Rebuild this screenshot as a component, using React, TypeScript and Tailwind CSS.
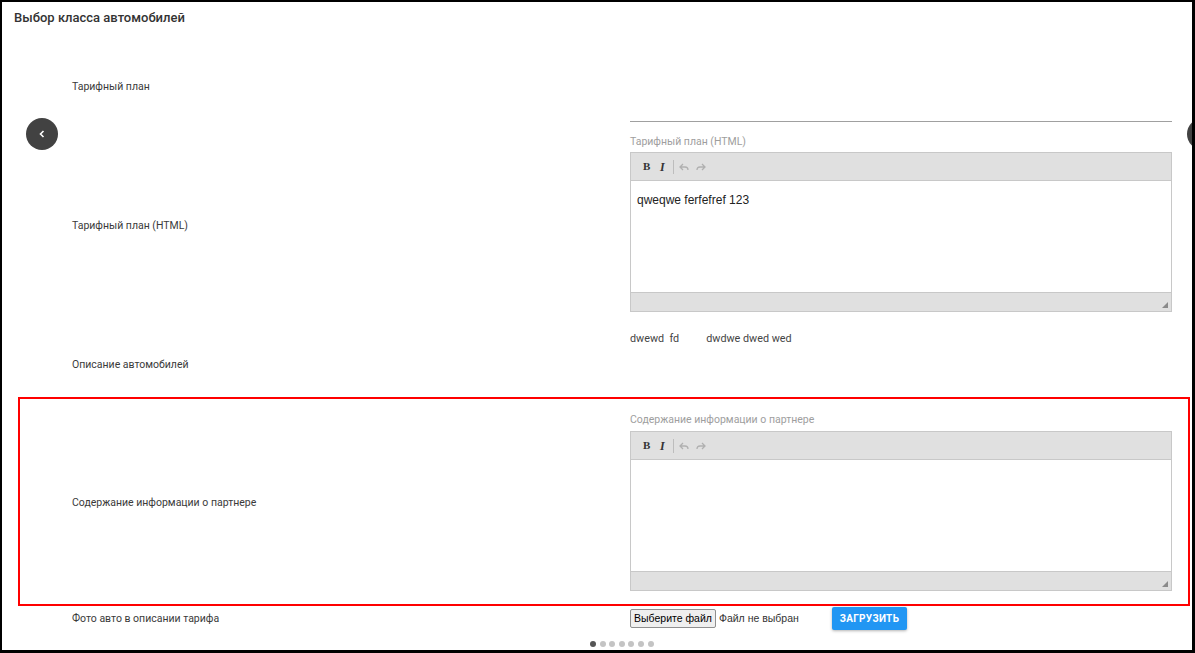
import React from 'react';

const font = { fontFamily: 'Roboto, "Noto Sans", Arial, sans-serif' };

function Toolbar() {
  return (
    <div className="h-[28px] bg-[#e0e0e0] border-b border-[#c8c8c8] flex items-center pl-[12px]">
      <span className="text-[11px] font-bold text-[#333] w-[17px]" style={{ fontFamily: '"Liberation Serif", "DejaVu Serif", serif' }}>
        B
      </span>
      <span className="text-[12px] italic font-bold text-[#333] w-[12px]" style={{ fontFamily: '"Liberation Serif", "DejaVu Serif", serif' }}>
        I
      </span>
      <span className="w-px h-[14px] bg-[#bdbdbd] ml-[1px] mr-[5px]" />
      <svg width="10" height="8" viewBox="0 0 10 8" className="mr-[7px]">
        <path d="M4 1 L1 4 L4 7 M1 4 H6 Q9 4 9 7" fill="none" stroke="#b0b0b0" strokeWidth="1.3" />
      </svg>
      <svg width="10" height="8" viewBox="0 0 10 8">
        <path d="M6 1 L9 4 L6 7 M9 4 H4 Q1 4 1 7" fill="none" stroke="#b0b0b0" strokeWidth="1.3" />
      </svg>
    </div>
  );
}

function Editor({ text }: { text?: string }) {
  return (
    <div className="border border-[#c8c8c8]">
      <Toolbar />
      <div className="h-[111px] bg-white pt-[12px] pl-[6px] text-[12px] leading-[14px] text-[#222]" style={{ fontFamily: '"Liberation Sans", Arial, sans-serif' }}>
        {text}
      </div>
      <div className="h-[19px] bg-[#e0e0e0] border-t border-[#c8c8c8] flex items-end justify-end pr-[3px] pb-[3px]">
        <svg width="6" height="6" viewBox="0 0 6 6">
          <polygon points="6,0 6,6 0,6" fill="#8a8a8a" />
        </svg>
      </div>
    </div>
  );
}

function FieldLabel({ children }: { children: React.ReactNode }) {
  return <div className="text-[10.5px] leading-[14px] text-[#3a3a3a]">{children}</div>;
}

function EditorField({ label, text, gap }: { label: string; text?: string; gap: string }) {
  return (
    <div className="flex flex-col">
      <div className="text-[10.5px] leading-[14px] text-[#9e9e9e]">{label}</div>
      <div className={gap}>
        <Editor text={text} />
      </div>
    </div>
  );
}

export default function App() {
  return (
    <div
      className="w-[1195px] h-[653px] bg-white border-black border-t-2 border-l-2 border-r-[3px] border-b-[3px] relative overflow-hidden"
      style={font}
    >
      {/* header */}
      <div className="h-[38px] pt-[8px] pl-[12px] text-[13px] leading-[16px] font-medium text-[#333]">
        Выбор класса автомобилей
      </div>

      {/* Тарифный план */}
      <div className="flex h-[92px]">
        <div className="w-[628px] pl-[70px] pt-[2px] flex items-center">
          <FieldLabel>Тарифный план</FieldLabel>
        </div>
        <div className="flex-1 pr-[20px] flex flex-col justify-end pb-[10px]">
          <div className="border-b border-[#a0a0a0]" />
        </div>
      </div>

      {/* Тарифный план (HTML) */}
      <div className="flex h-[186px]">
        <div className="w-[628px] pl-[70px] pt-[2px] flex items-center">
          <FieldLabel>Тарифный план (HTML)</FieldLabel>
        </div>
        <div className="flex-1 pr-[20px] pt-[3px]">
          <EditorField label="Тарифный план (HTML)" text="qweqwe ferfefref 123" gap="mt-[3px]" />
        </div>
      </div>

      {/* Описание автомобилей */}
      <div className="flex h-[79px]">
        <div className="w-[628px] pl-[70px] pt-[40px]">
          <FieldLabel>Описание автомобилей</FieldLabel>
        </div>
        <div className="flex-1 pr-[20px] pt-[14px] text-[10.8px] leading-[14px] text-[#444] whitespace-pre">
          <span>dwewd  fd</span>
          <span className="ml-[27px]">dwdwe dwed wed</span>
        </div>
      </div>

      {/* Содержание информации о партнере (highlighted) */}
      <div className="flex h-[209px] ml-[16px] mr-[2px] border-2 border-[#f00]">
        <div className="w-[610px] pl-[52px] pt-[3px] flex items-center">
          <FieldLabel>Содержание информации о партнере</FieldLabel>
        </div>
        <div className="flex-1 pr-[16px] pt-[14px]">
          <EditorField label="Содержание информации о партнере" gap="mt-[4px]" />
        </div>
      </div>

      {/* Фото авто */}
      <div className="flex h-[45px]">
        <div className="w-[628px] pl-[70px] pt-[6px]">
          <FieldLabel>Фото авто в описании тарифа</FieldLabel>
        </div>
        <div className="flex-1 flex items-start pt-[1px]">
          <div className="w-[202px] flex items-center h-[23px]" style={{ fontFamily: '"Liberation Sans", Arial, sans-serif' }}>
            <span className="h-[19px] px-[3px] flex items-center border border-[#8f8f8f] rounded-[2px] bg-[#efefef] text-[10.5px] text-black">
              Выберите файл
            </span>
            <span className="ml-[3px] text-[10.5px] text-[#333]">Файл не выбран</span>
          </div>
          <button className="w-[75px] h-[23px] rounded-[2px] bg-[#2196f3] text-white text-[10px] font-bold tracking-[0.3px] shadow-[0_1px_3px_rgba(0,0,0,0.3)]">
            ЗАГРУЗИТЬ
          </button>
        </div>
      </div>

      {/* carousel arrows */}
      <div className="absolute left-[24px] top-[116px] w-[32px] h-[32px] rounded-full bg-[#424242] flex items-center justify-center">
        <svg width="6" height="8" viewBox="0 0 6 8">
          <polyline points="4.5,1 1.5,4 4.5,7" fill="none" stroke="#fff" strokeWidth="1.6" />
        </svg>
      </div>
      <div className="absolute left-[1185px] top-[116px] w-[32px] h-[32px] rounded-full bg-[#424242]" />

      {/* carousel dots */}
      <div className="absolute left-[588px] top-[639px] flex gap-[3.6px]">
        {[0, 1, 2, 3, 4, 5, 6].map((i) => (
          <span key={i} className={'w-[6px] h-[6px] rounded-full ' + (i === 0 ? 'bg-[#555]' : 'bg-[#c4c4c4]')} />
        ))}
      </div>
    </div>
  );
}
